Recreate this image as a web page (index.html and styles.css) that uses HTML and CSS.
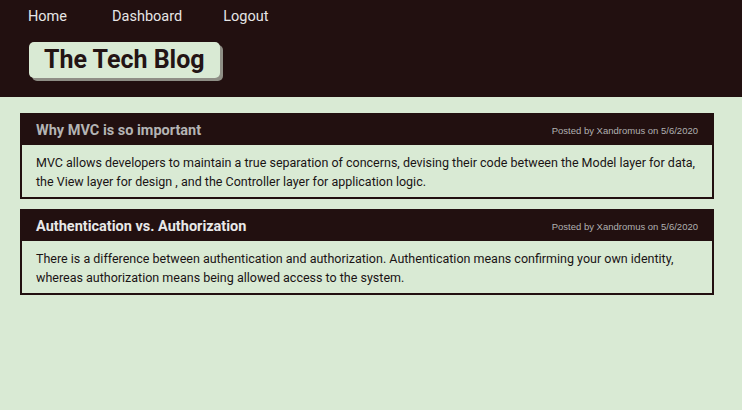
FILE: index.html
```html
<!DOCTYPE html>
<html>
<head>
<meta charset="utf-8">
<link rel="stylesheet" href="styles.css">
</head>
<body>
<header class="site-header">
  <nav class="nav">
    <a href="#" class="nav-link">Home</a>
    <a href="#" class="nav-link">Dashboard</a>
    <a href="#" class="nav-link">Logout</a>
  </nav>
  <h1 class="brand">The Tech Blog</h1>
</header>
<main class="posts">
  <article class="post">
    <div class="post-head">
      <h2 class="post-title">Why MVC is so important</h2>
      <span class="post-meta">Posted by Xandromus on 5/6/2020</span>
    </div>
    <p class="post-body">MVC allows developers to maintain a true separation of concerns, devising their code between the Model layer for data, the View layer for design , and the Controller layer for application logic.</p>
  </article>
  <article class="post">
    <div class="post-head">
      <h2 class="post-title">Authentication vs. Authorization</h2>
      <span class="post-meta">Posted by Xandromus on 5/6/2020</span>
    </div>
    <p class="post-body">There is a difference between authentication and authorization. Authentication means confirming your own identity, whereas authorization means being allowed access to the system.</p>
  </article>
</main>
</body>
</html>
```
FILE: styles.css
```css
* { box-sizing: border-box; }
html, body { margin: 0; padding: 0; }
body {
  background: #d9ead4;
  font-family: Roboto, "Liberation Sans", sans-serif;
  color: #1e1414;
  height: 410px;
}
.site-header {
  background: #221010;
  height: 97px;
  padding: 8px 0 0 28px;
}
.nav {
  display: flex;
}
.nav-link {
  color: #e6e6e6;
  text-decoration: none;
  font-size: 14.5px;
  line-height: 18px;
}
.nav-link:nth-child(1) { margin-right: 45px; }
.nav-link:nth-child(2) { margin-right: 41px; }
.brand {
  display: inline-block;
  margin: 16px 0 0 1px;
  background: #d9ead4;
  color: #231414;
  font-size: 25px;
  font-weight: 700;
  line-height: 36px;
  padding: 0 15px 0 15px;
  border-radius: 5px;
  box-shadow: 3px 3px 0 #8f8f86;
}
.posts {
  padding: 16px 28px 0 20px;
  display: flex;
  flex-direction: column;
  gap: 10px;
}
.post {
  border: 2px solid #221010;
  background: #d9ead4;
}
.post-head {
  background: #221010;
  display: flex;
  justify-content: space-between;
  align-items: center;
  height: 30px;
  padding: 0 14px 0 14px;
}
.post-title {
  margin: 0;
  font-size: 14.5px;
  font-weight: 700;
  color: #b4b4b4;
}
.post:nth-child(2) .post-title { color: #e8e8e8; }
.post-meta {
  font-family: "Liberation Sans", Arial, sans-serif;
  font-size: 9.5px;
  color: #b0b0b0;
}
.post-body {
  margin: 0;
  padding: 8px 14px 6px 14px;
  font-size: 12.5px;
  line-height: 19px;
  color: #1a1414;
}
```
